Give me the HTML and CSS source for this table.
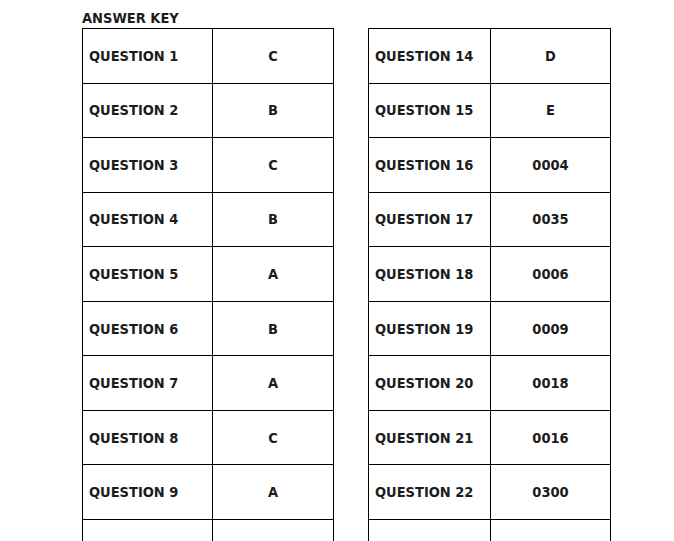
FILE: index.html
```html
<!DOCTYPE html>
<html>
<head>
<meta charset="utf-8">
<link rel="stylesheet" href="styles.css">
</head>
<body>
<div class="page">
  <h1 class="title">ANSWER KEY</h1>
  <div class="tables">
    <table class="key key-left">
      <colgroup><col class="col-q"><col class="col-a"></colgroup>
      <tr><td class="q">QUESTION 1</td><td class="a">C</td></tr>
      <tr><td class="q">QUESTION 2</td><td class="a">B</td></tr>
      <tr><td class="q">QUESTION 3</td><td class="a">C</td></tr>
      <tr><td class="q">QUESTION 4</td><td class="a">B</td></tr>
      <tr><td class="q">QUESTION 5</td><td class="a">A</td></tr>
      <tr><td class="q">QUESTION 6</td><td class="a">B</td></tr>
      <tr><td class="q">QUESTION 7</td><td class="a">A</td></tr>
      <tr><td class="q">QUESTION 8</td><td class="a">C</td></tr>
      <tr><td class="q">QUESTION 9</td><td class="a">A</td></tr>
      <tr><td class="q"></td><td class="a"></td></tr>
    </table>
    <table class="key key-right">
      <colgroup><col class="col-q"><col class="col-a"></colgroup>
      <tr><td class="q">QUESTION 14</td><td class="a">D</td></tr>
      <tr><td class="q">QUESTION 15</td><td class="a">E</td></tr>
      <tr><td class="q">QUESTION 16</td><td class="a">0004</td></tr>
      <tr><td class="q">QUESTION 17</td><td class="a">0035</td></tr>
      <tr><td class="q">QUESTION 18</td><td class="a">0006</td></tr>
      <tr><td class="q">QUESTION 19</td><td class="a">0009</td></tr>
      <tr><td class="q">QUESTION 20</td><td class="a">0018</td></tr>
      <tr><td class="q">QUESTION 21</td><td class="a">0016</td></tr>
      <tr><td class="q">QUESTION 22</td><td class="a">0300</td></tr>
      <tr><td class="q"></td><td class="a"></td></tr>
    </table>
  </div>
</div>
</body>
</html>
```
FILE: styles.css
```css
html, body {
  margin: 0;
  padding: 0;
  background: #fff;
  overflow: hidden;
}
body {
  font-family: "DejaVu Sans Condensed", "DejaVu Sans", sans-serif;
  font-stretch: condensed;
  font-weight: bold;
  color: #1c1c1c;
}
.page {
  padding: 10px 0 0 82px;
}
.title {
  margin: 0;
  font-size: 14.5px;
  line-height: 17px;
  font-weight: bold;
  height: 18px;
}
.tables {
  display: flex;
  gap: 34px;
  align-items: flex-start;
}
.key {
  border-collapse: collapse;
  table-layout: fixed;
}
.key td {
  border: 1px solid #000;
  height: 52.56px;
  padding: 1px 0 0 0;
  font-size: 14.5px;
  line-height: 17px;
  vertical-align: middle;
}
.key-left { width: 251px; }
.key-left .col-q { width: 130px; }
.key-left .col-a { width: 121px; }
.key-right { width: 242px; }
.key-right .col-q { width: 122px; }
.key-right .col-a { width: 120px; }
.key .q {
  padding-left: 6px;
}
.key .a {
  text-align: center;
}
```
